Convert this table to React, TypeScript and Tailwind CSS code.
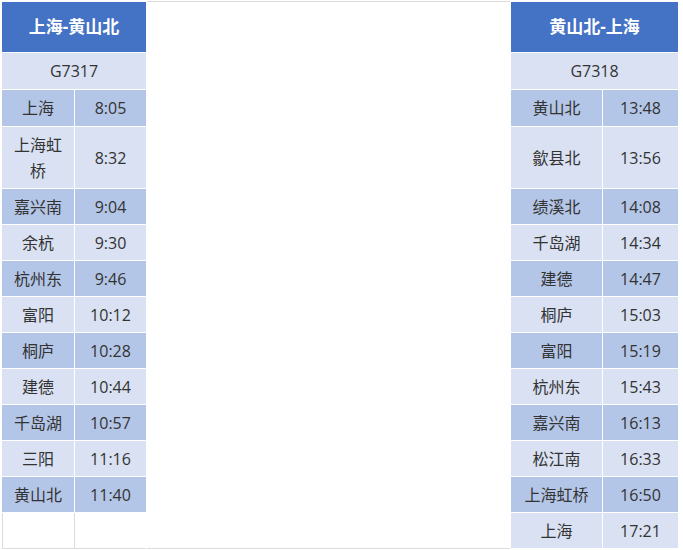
import React from "react";

const left = [
  ["上海", "8:05"],
  ["上海虹桥", "8:32"],
  ["嘉兴南", "9:04"],
  ["余杭", "9:30"],
  ["杭州东", "9:46"],
  ["富阳", "10:12"],
  ["桐庐", "10:28"],
  ["建德", "10:44"],
  ["千岛湖", "10:57"],
  ["三阳", "11:16"],
  ["黄山北", "11:40"],
];

const right = [
  ["黄山北", "13:48"],
  ["歙县北", "13:56"],
  ["绩溪北", "14:08"],
  ["千岛湖", "14:34"],
  ["建德", "14:47"],
  ["桐庐", "15:03"],
  ["富阳", "15:19"],
  ["杭州东", "15:43"],
  ["嘉兴南", "16:13"],
  ["松江南", "16:33"],
  ["上海虹桥", "16:50"],
  ["上海", "17:21"],
];

const cell = "flex items-center justify-center text-center text-[16px] leading-[26px] text-[#333]";

export default function App() {
  return (
    <div
      className="w-[683px] h-[550px] bg-white pt-[2px] pl-[2px]"
      style={{ fontFamily: '"Open Sans", "Noto Sans CJK SC", sans-serif' }}
    >
      <div className="grid grid-cols-[72px_71px_363px_91px_75px] grid-rows-[50px_36px_36px_61px_repeat(9,35px)_35px] gap-px bg-white">
        {/* headers */}
        <div className="col-span-2 bg-[#4472c4] flex items-center justify-center text-white font-bold text-[17px]">
          上海-黄山北
        </div>
        <div className="row-span-14 col-start-3 row-start-1 -mt-px mb-[-1px] border-t border-b border-[#dcdcdc] bg-white" />
        <div className="col-span-2 col-start-4 row-start-1 bg-[#4472c4] flex items-center justify-center text-white font-bold text-[17px]">
          黄山北-上海
        </div>

        {/* train numbers */}
        <div className={`col-span-2 col-start-1 row-start-2 bg-[#d9e1f2] ${cell}`}>G7317</div>
        <div className={`col-span-2 col-start-4 row-start-2 bg-[#d9e1f2] ${cell}`}>G7318</div>

        {left.map((r, i) => {
          const bg = i % 2 === 0 ? "bg-[#b4c6e7]" : "bg-[#d9e1f2]";
          return (
            <React.Fragment key={"l" + i}>
              <div className={`col-start-1 ${bg} ${cell} px-2`} style={{ gridRowStart: i + 3 }}>
                {r[0]}
              </div>
              <div className={`col-start-2 ${bg} ${cell}`} style={{ gridRowStart: i + 3 }}>
                {r[1]}
              </div>
            </React.Fragment>
          );
        })}
        <div className="col-start-1 row-start-14 bg-white border-l border-b border-[#dcdcdc] mb-[-1px]" />
        <div className="col-start-2 row-start-14 bg-white border-l border-b border-[#dcdcdc] -ml-px mb-[-1px]" />

        {right.map((r, i) => {
          const bg = i % 2 === 0 ? "bg-[#b4c6e7]" : "bg-[#d9e1f2]";
          return (
            <React.Fragment key={"r" + i}>
              <div className={`col-start-4 ${bg} ${cell}`} style={{ gridRowStart: i + 3 }}>
                {r[0]}
              </div>
              <div className={`col-start-5 ${bg} ${cell}`} style={{ gridRowStart: i + 3 }}>
                {r[1]}
              </div>
            </React.Fragment>
          );
        })}
      </div>
    </div>
  );
}
